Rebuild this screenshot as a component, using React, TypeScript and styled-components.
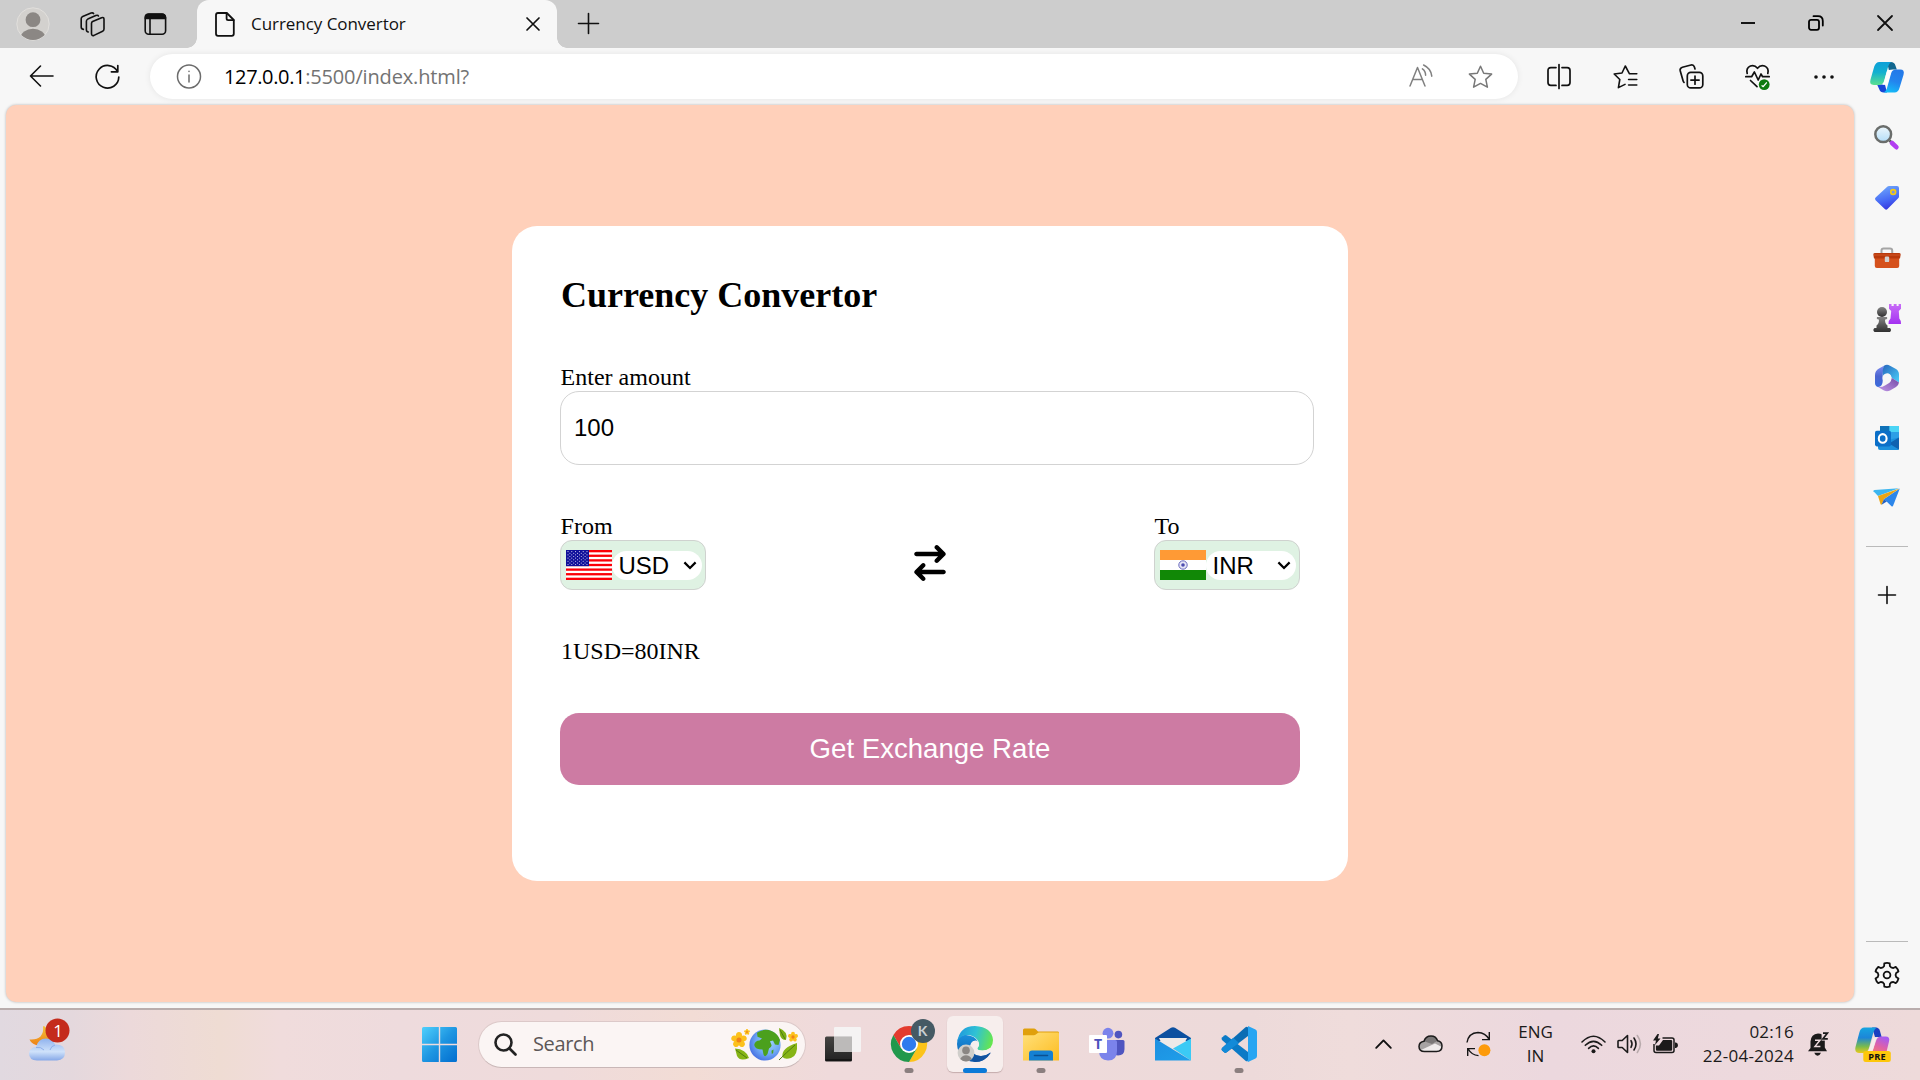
import React from "react";
import styled, { createGlobalStyle, css } from "styled-components";
import { FaArrowRightArrowLeft } from "react-icons/fa6";

const GlobalStyle = createGlobalStyle`
  *, *::before, *::after { box-sizing: border-box; }
  html, body { margin: 0; padding: 0; overflow: hidden; }
  svg { display: block; flex: none; overflow: visible; }
`;

const uiFont = css`font-family: "Open Sans", "Noto Sans", sans-serif;`;
const serif = css`font-family: "Liberation Serif", "Times New Roman", serif;`;
const arial = css`font-family: "Liberation Sans", Arial, sans-serif;`;

const Screen = styled.div`
  width: 1920px;
  height: 1080px;
  display: flex;
  flex-direction: column;
  overflow: hidden;
  background: #f7f7f7;
  ${uiFont}
`;

const Cell = styled.div<{ $w: number; $h?: number }>`
  flex: none;
  width: ${(p) => p.$w}px;
  height: ${(p) => (p.$h ? p.$h + "px" : "100%")};
  display: flex;
  align-items: center;
  justify-content: center;
`;

/* ---------- browser chrome ---------- */

const TitleBar = styled.header`
  flex: none;
  height: 48px;
  display: flex;
  background: #cdcdcd;
`;

const Tab = styled.div`
  position: relative;
  width: 360px;
  margin-left: 7px;
  padding: 0 17px 0 18px;
  display: flex;
  align-items: center;
  background: #f7f7f7;
  border-radius: 12px 12px 0 0;

  &::before,
  &::after {
    content: "";
    position: absolute;
    bottom: 0;
    width: 10px;
    height: 10px;
  }
  &::before {
    left: -10px;
    background: radial-gradient(circle at 0 0, transparent 9.5px, #f7f7f7 10px);
  }
  &::after {
    right: -10px;
    background: radial-gradient(circle at 100% 0, transparent 9.5px, #f7f7f7 10px);
  }
`;

const TabTitle = styled.span`
  flex: 1;
  margin-left: 16px;
  font-size: 17px;
  line-height: 24px;
  letter-spacing: -0.05px;
  color: #111;
  white-space: nowrap;
`;

const WindowControls = styled.div`
  margin-left: auto;
  display: flex;
  height: 46px;
`;

const Toolbar = styled.div`
  flex: none;
  height: 57px;
  display: flex;
  align-items: center;
  background: #f7f7f7;
`;

const NavButtons = styled.div`
  width: 132px;
  height: 56px;
  padding-bottom: 1px;
  display: flex;
`;

const AddressBar = styled.div`
  width: 1368px;
  height: 45px;
  margin: 0 8px 0 18px;
  padding-right: 8px;
  display: flex;
  align-items: center;
  background: #fff;
  border-radius: 23px;
  box-shadow: 0 0 6px rgba(0, 0, 0, 0.08);
`;

const Url = styled.span`
  flex: 1;
  margin-left: -2px;
  font-size: 20px;
  line-height: 28px;
  letter-spacing: -0.15px;
  color: #737373;
  white-space: nowrap;
`;

const Host = styled.span`
  letter-spacing: -0.36px;
  color: #000;
`;

const Workspace = styled.div`
  flex: 1;
  min-height: 0;
  display: flex;
`;

const Page = styled.main`
  width: 1848px;
  height: 897px;
  margin-left: 6px;
  display: flex;
  justify-content: center;
  align-items: flex-start;
  padding-top: 121px;
  background: #ffd0ba;
  border-radius: 10px;
  box-shadow: 0 0 3px rgba(0, 0, 0, 0.28);
`;

const Sidebar = styled.aside`
  width: 66px;
  padding-top: 3px;
  display: flex;
  flex-direction: column;
  align-items: center;
`;

const Divider = styled.div<{ $top: string; $bottom: number }>`
  flex: none;
  width: 42px;
  height: 1px;
  margin-top: ${(p) => p.$top};
  margin-bottom: ${(p) => p.$bottom}px;
  background: #bababa;
`;

/* ---------- convertor card ---------- */

const Card = styled.form`
  width: 836px;
  height: 655px;
  padding: 48px;
  display: flex;
  flex-direction: column;
  background: #fff;
  border-radius: 25px;
  color: #000;
  ${serif}
  font-size: 24px;
  line-height: 27px;
`;

const Title = styled.h2`
  margin: 0 0 48px;
  padding-left: 1px;
  font-size: 36px;
  line-height: 42px;
`;

const Label = styled.div<{ $inset?: number }>`
  padding-left: ${(p) => p.$inset ?? 0.6}px;
`;

const AmountInput = styled.input`
  width: 754px;
  height: 74px;
  margin: 0 0 48px;
  padding: 0 14px 0 13px;
  border: 1px solid #d3d3d3;
  border-radius: 19px;
  background: #fff;
  color: #000;
  outline: none;
  ${arial}
  font-size: 24px;
`;

const Row = styled.div`
  display: flex;
  justify-content: space-between;
`;

const Currency = styled.div`
  width: 146px;
`;

const SelectBox = styled.div`
  height: 50px;
  padding: 0 3px 0 5px;
  display: flex;
  align-items: center;
  justify-content: space-between;
  background: #dff2e3;
  border: 1px solid #cfd2cf;
  border-radius: 12px;
`;

const SelectPill = styled.div`
  width: 90px;
  height: 29px;
  padding: 0 5.5px 0 6.5px;
  display: flex;
  align-items: center;
  justify-content: space-between;
  background: #fff;
  border-radius: 15px;
`;

const NativeSelect = styled.select`
  appearance: none;
  width: 58px;
  height: 29px;
  padding: 0;
  border: 0;
  background: transparent;
  color: #000;
  ${arial}
  font-size: 24px;
  line-height: 29px;
`;

const SwapIcon = styled.div`
  display: flex;
  align-items: center;
  padding-top: 23px;
`;

const Message = styled.div`
  margin: 48px 0;
  padding-left: 1px;
`;

const SubmitButton = styled.button`
  height: 72px;
  border: 0;
  border-radius: 19px;
  background: #cd7ba3;
  color: #fff;
  ${arial}
  font-size: 27.6px;
`;

/* ---------- taskbar ---------- */

const TaskBar = styled.footer`
  flex: none;
  height: 72px;
  padding-bottom: 2px;
  display: flex;
  align-items: center;
  border-top: 2px solid #b9adad;
  background: linear-gradient(
    90deg,
    #e1d9e0 0, #e4d8dd 70px, #ecd9da 130px, #efdcd3 220px, #f0dcdc 280px,
    #eedbdd 400px, #efdbdb 560px, #f2dcd5 690px, #efdadb 830px, #eddada 1250px,
    #efdcdb 1350px, #ecd8de 1550px, #edd9dd 1750px, #eedada 1920px
  );
`;

const Weather = styled.div`
  width: 406px;
  padding: 0 0 8px 29px;
`;

const SearchBox = styled.div`
  width: 328px;
  height: 47px;
  margin: 0 4px 0 6px;
  padding: 0 6px 0 15px;
  display: flex;
  align-items: center;
  background: #fbf5f4;
  border: 1.5px solid #dcc9c9;
  border-bottom-color: #c9b7b7;
  border-radius: 24px;
`;

const SearchText = styled.span`
  flex: 1;
  margin-left: 16px;
  font-size: 20px;
  letter-spacing: -0.35px;
  line-height: 28px;
  color: #5c5757;
`;

const AppTile = styled.div<{ $active?: boolean }>`
  position: relative;
  width: 56px;
  height: 56px;
  margin: 0 5px;
  display: flex;
  align-items: center;
  justify-content: center;
  border-radius: 6px;
  ${(p) => p.$active && css`
    background: #f7eeed;
    box-shadow: 0 1px 1px rgba(120, 90, 90, 0.35);
  `}
`;

const Running = styled.span<{ $active?: boolean }>`
  position: absolute;
  bottom: -1px;
  left: 50%;
  width: ${(p) => (p.$active ? 24 : 9)}px;
  height: 5px;
  transform: translateX(-50%);
  border-radius: 3px;
  background: ${(p) => (p.$active ? "#0b7ad8" : "#8b7f7f")};
`;

const Tray = styled.div`
  margin-left: auto;
  padding-right: 17px;
  height: 56px;
  display: flex;
  align-items: center;
  color: #1b1a1a;
`;

const TrayGroup = styled.div`
  height: 100%;
  padding: 0 6px;
  display: flex;
`;

const TrayText = styled.div<{ $w: number; $align: string; $track: number }>`
  width: ${(p) => p.$w}px;
  text-align: ${(p) => p.$align};
  font-size: 17px;
  line-height: 24px;
  letter-spacing: ${(p) => p.$track}px;
  white-space: nowrap;
`;

/* ---------- line icons ---------- */

type LineProps = { w: number; h: number; s?: number; c?: string; children: React.ReactNode };
const Line = ({ w, h, s = 1.5, c = "#111", children }: LineProps) => (
  <svg width={w} height={h} viewBox={`0 0 ${w} ${h}`} fill="none" stroke={c} strokeWidth={s} strokeLinecap="round" strokeLinejoin="round">
    {children}
  </svg>
);

const Avatar = () => (
  <svg width="34" height="34" viewBox="0 0 34 34">
    <defs><clipPath id="av"><circle cx="17" cy="17" r="16" /></clipPath></defs>
    <circle cx="17" cy="17" r="16.2" fill="#d3d1ce" stroke="#e2e0dd" />
    <g clipPath="url(#av)" fill="#8b8784">
      <circle cx="17" cy="12.7" r="7.4" />
      <ellipse cx="17" cy="31" rx="12.5" ry="9.3" />
    </g>
  </svg>
);

const Workspaces = () => (
  <Line w={25} h={25} s={1.6}>
    <path d="M12.6 9.6 L21.6 5.7 Q24 5 24 7.3 V17 Q24 18.6 22.6 19.3 L14 23.4 Q11.6 24.2 11.5 21.8 V11.4 Q11.5 10.1 12.6 9.6Z" />
    <path d="M8.3 20 Q6.4 19.8 6.4 17.8 V9.2 Q6.4 7.8 7.8 7.1 L15.8 3.5 Q18 2.8 18.4 4" />
    <path d="M3.4 17.4 Q1.2 17 1.2 15 V6.7 Q1.2 5.2 2.7 4.5 L11 1.1 Q13 .5 13.6 1.6" />
  </Line>
);

const TabActions = () => (
  <Line w={23} h={23} s={1.6}>
    <rect x="1.2" y="1.2" width="20.4" height="20" rx="3.5" />
    <path d="M1.6 2.5 Q2.5 1 4.5 1 H18 Q21 1 21.4 4 V5.5 H1.4Z" fill="#111" />
    <path d="M6 6 V21" />
  </Line>
);

const Doc = () => (
  <Line w={20} h={25} s={1.8}>
    <path d="M3 1 H11.8 L18.8 8 V21.8 Q18.8 23.8 16.8 23.8 H3 Q1 23.8 1 21.8 V3 Q1 1 3 1Z" />
    <path d="M11.6 1.2 V6.6 Q11.6 8.2 13.2 8.2 H18.6" />
  </Line>
);

const Cross = ({ size, s }: { size: number; s: number }) => (
  <Line w={size} h={size} s={s}>
    <path d={`M1 1 L${size - 1} ${size - 1} M${size - 1} 1 L1 ${size - 1}`} />
  </Line>
);

const Plus = ({ size }: { size: number }) => (
  <Line w={size} h={size} s={1.6}>
    <path d={`M${size / 2} .5 V${size - 0.5} M.5 ${size / 2} H${size - 0.5}`} />
  </Line>
);

const starPath = "M12.5 1.2 L15.7 8.2 L23.6 9.1 L17.8 14.4 L19.4 22.2 L12.5 18.4 L5.6 22.2 L7.2 14.4 L1.4 9.1 L9.3 8.2Z";

const CopilotLogo = () => (
  <svg width="34" height="32" viewBox="0 0 36 33">
    <defs>
      <linearGradient id="cpa" x1="0" y1="0" x2="0" y2="1"><stop stopColor="#0d9fd8" /><stop offset=".45" stopColor="#12b0d0" /><stop offset="1" stopColor="#5be08f" /></linearGradient>
      <linearGradient id="cpb" x1=".6" y1="0" x2=".3" y2="1"><stop stopColor="#2479e8" /><stop offset=".5" stopColor="#2385ee" /><stop offset="1" stopColor="#14bdf8" /></linearGradient>
    </defs>
    <path d="M18 .5 H22 Q26 .5 27 4.5 L28.4 8.6 H24 L20 9Z" fill="#11668f" />
    <path d="M7.5 24.5 H15.8 L18 33 H14.5 Q11 33 9.8 29.5Z" fill="#1746d6" />
    <path d="M10 .5 H22.5 Q20.5 1.5 19.3 5 L14.8 21 Q13.4 25 9.4 25 H4 Q-1 25 .5 19.5 L4.5 5.5 Q6 .5 10 .5Z" fill="url(#cpa)" />
    <path d="M26 33 H14.5 Q16.7 32 17.8 29 L22.4 12.5 Q23.6 8.5 27.5 8.5 H32 Q37 8.5 35.5 14 L31.3 28 Q30 33 26 33Z" fill="url(#cpb)" />
    <path d="M19 9.2 H23.6 Q22.4 10.6 22 12 L19 22.5 Q18.2 24.8 15.8 24.8 H13 Q14.4 23.4 15 21.4 L17.6 11.6 Q18 10 19 9.2Z" fill="#fdfdfd" />
  </svg>
);

/* ---------- sidebar icons ---------- */

const SearchColor = () => (
  <svg width="26" height="26" viewBox="0 0 26 26">
    <defs><linearGradient id="lens" x1="0" y1="0" x2="0" y2="1"><stop stopColor="#eef7fc" /><stop offset="1" stopColor="#b3ddf8" /></linearGradient></defs>
    <path d="M15.5 15.5 L18 18" stroke="#5b5d5b" strokeWidth="2.5" />
    <path d="M18 18 L22.4 22.2" stroke="#b23df0" strokeWidth="4.6" strokeLinecap="round" />
    <circle cx="9.2" cy="9.2" r="7.9" fill="url(#lens)" stroke="#6a6d6b" strokeWidth="2.5" />
  </svg>
);

const Tag = () => (
  <svg width="26" height="26" viewBox="0 0 26 26">
    <defs><linearGradient id="tag" x1=".3" y1="0" x2=".6" y2="1"><stop stopColor="#6fa8fb" /><stop offset=".6" stopColor="#4668f5" /><stop offset="1" stopColor="#3433dd" /></linearGradient></defs>
    <path d="M13.5 1.6 Q14 1 15 1 H23 Q25 1 25 3 V11.5 Q25 12.5 24.2 13.2 L13.5 24 Q12.2 25.3 10.8 24 L1.6 15.2 Q.3 13.8 1.6 12.5Z" fill="url(#tag)" />
    <circle cx="19.2" cy="7" r="2.4" fill="#7f93d8" stroke="#f6cb12" strokeWidth="1.7" />
  </svg>
);

const Toolbox = () => (
  <svg width="28" height="22" viewBox="0 0 28 22">
    <path d="M8.5 7.5 V3.6 Q8.5 1.5 10.6 1.5 H17 Q19.2 1.5 19.2 3.6 V7.5" fill="none" stroke="#a5a5a5" strokeWidth="2" />
    <path d="M1.8 10 H26.2 V19 Q26.2 21 24.2 21 H3.8 Q1.8 21 1.8 19Z" fill="#d5511c" />
    <path d="M2 6 H26 Q28 6 27.6 8 L27 11.5 H1 L.4 8 Q0 6 2 6Z" fill="#b93a0c" />
    <path d="M1 8 L27 8" stroke="#cf5224" strokeWidth="1.2" />
    <rect x="11.8" y="9.5" width="4.4" height="5.6" rx="1.2" fill="#d2d2d2" />
  </svg>
);

const Games = () => (
  <svg width="28" height="28" viewBox="0 0 28 28">
    <defs>
      <linearGradient id="rook" x1="0" y1="0" x2="0" y2="1"><stop stopColor="#c86df7" /><stop offset="1" stopColor="#a431f1" /></linearGradient>
      <linearGradient id="pawn" x1="0" y1="0" x2="0" y2="1"><stop stopColor="#858585" /><stop offset="1" stopColor="#303030" /></linearGradient>
    </defs>
    <path d="M16 0 H18.5 V2 H20.7 V0 H23.6 V2 H25.6 V0 H28 V4.8 L25.8 7 L26.3 14.5 Q28 16 28 20 H15.5 Q15.5 16 17.5 14.5 L18.2 7 L16 4.8Z" fill="url(#rook)" />
    <circle cx="9" cy="8" r="5" fill="url(#pawn)" />
    <path d="M4 13 H14 Q15 14.5 13 15.6 H12 Q12 20 14.5 21.4 V24 H17 Q19 26 17 28 H1.5 Q-.8 26 1.5 24 H3.5 V21.4 Q6 20 6 15.6 H5 Q3 14.5 4 13Z" fill="url(#pawn)" />
  </svg>
);

const Microsoft365 = () => (
  <svg width="26" height="28" viewBox="0 0 26 28">
    <defs>
      <linearGradient id="ma" x1="0" y1="0" x2="0" y2="1"><stop stopColor="#7e8cf0" /><stop offset=".5" stopColor="#4c65d0" /><stop offset="1" stopColor="#3a6bdc" /></linearGradient>
      <linearGradient id="mb" x1="0" y1="0" x2="1" y2="1"><stop stopColor="#2766bd" /><stop offset="1" stopColor="#4ad0fa" /></linearGradient>
      <linearGradient id="mc" x1="0" y1="1" x2="1" y2="0"><stop stopColor="#c298e8" /><stop offset="1" stopColor="#724aa5" /></linearGradient>
    </defs>
    <path d="M10 1.7 L5 4.5 Q1 6.8 1 11 V19 Q1 22 4 23 Q8.7 22.5 8.7 17 V11 Q8.7 6 10 1.7Z" fill="url(#ma)" />
    <path d="M10 1.7 Q13 0 16 1.7 L22 5 Q25 7 25 10.5 V18.5 L17.5 13.8 Q17 11 15 9.8 Q12 8.5 8.9 12 Q8 6 10 1.7Z" fill="url(#mb)" />
    <path d="M25 18.5 Q24.5 21.5 22 23 L16 26.5 Q13 28 10 26.5 L4 23 Q8 23.5 11 21.5 L15.5 18.8 Q17.5 17 17.5 13.8Z" fill="url(#mc)" />
    <circle cx="13" cy="14" r="4.5" fill="#f7f7f7" />
  </svg>
);

const Outlook = () => (
  <svg width="26" height="26" viewBox="0 0 26 26">
    <rect x="6" y="1" width="19" height="20" rx="1" fill="#35b4ee" />
    <path d="M6 1 H15.5 V7 H6Z" fill="#1072b8" />
    <path d="M15.5 1 H25 V7 H15.5Z" fill="#4bd4f5" />
    <path d="M15.5 7 H25 V14 H15.5Z" fill="#2d9fe6" />
    <path d="M25 12.5 V24 Q25 25 24 25 H6 Q4 25 4 23 V17Z" fill="#1c90dc" />
    <path d="M25 12.5 L15 18.5 L25 24.5Z" fill="#0f62b0" />
    <rect x="1" y="5.8" width="16" height="15.6" rx="1.8" fill="#0b6fc8" />
    <ellipse cx="8.7" cy="13.4" rx="3.9" ry="4.3" fill="none" stroke="#fff" strokeWidth="2.1" />
  </svg>
);

const Plane = () => (
  <svg width="28" height="20" viewBox="0 0 28 20">
    <path d="M.5 3.2 Q0 2.2 1.5 2 L26 .3 L5 8Z" fill="#3eb6ef" />
    <path d="M26.8 .6 L11 11 L18.5 18.2 Q19.6 19 20.2 17.6Z" fill="#2c86ea" />
    <path d="M26.5 .6 L5 8 L7.5 16 Q8.2 17.3 9 16 L11 11Z" fill="#eaa514" />
    <path d="M11 11 L13.8 13.4 L8.6 16.8Z" fill="#2360c4" />
  </svg>
);

const gearPath = (() => {
  const at = (deg: number, r: number) => {
    const a = ((deg - 90) * Math.PI) / 180;
    return `${(13 + r * Math.cos(a)).toFixed(2)} ${(13 + r * Math.sin(a)).toFixed(2)}`;
  };
  let d = `M${at(-13, 12)}`;
  for (let i = 0; i < 6; i++) {
    const b = i * 60;
    d += ` Q${at(b, 12.5)} ${at(b + 13, 12)} L${at(b + 18, 9.4)} Q${at(b + 30, 8)} ${at(b + 42, 9.4)} L${at(b + 47, 12)}`;
  }
  return d + "Z";
})();

/* ---------- flags ---------- */

const FlagUS = () => (
  <svg width="46" height="30" viewBox="0 0 46 30">
    <rect width="46" height="30" fill="#fff" />
    {Array.from({ length: 7 }, (_, i) => (
      <rect key={i} y={(i * 2 * 30) / 13} width="46" height={30 / 13} fill="#fb0008" />
    ))}
    <rect width="23" height="16.15" fill="#10109a" />
    {Array.from({ length: 9 }, (_, r) =>
      Array.from({ length: r % 2 ? 5 : 6 }, (_, k) => (
        <circle key={`${r}-${k}`} cx={2 + k * 3.8 + (r % 2 ? 1.9 : 0)} cy={1.6 + r * 1.62} r=".55" fill="#d8d8f4" />
      ))
    )}
  </svg>
);

const FlagIN = () => (
  <svg width="46" height="30" viewBox="0 0 46 30">
    <rect width="46" height="10" fill="#ff9a35" />
    <rect y="10" width="46" height="10" fill="#fff" />
    <rect y="20" width="46" height="10" fill="#118806" />
    <circle cx="23" cy="15" r="4.2" fill="#e6e6f6" stroke="#6a6abf" strokeWidth="1" />
    <circle cx="23" cy="15" r="1.8" fill="#4c4cb0" />
  </svg>
);

const Chevron = () => (
  <Line w={14} h={9} s={2.2} c="#000"><path d="M1.4 1.4 L7 7 L12.6 1.4" strokeLinecap="butt" strokeLinejoin="miter" /></Line>
);

/* ---------- taskbar icons ---------- */

const WeatherIcon = () => (
  <svg width="42" height="44" viewBox="0 0 42 44">
    <defs>
      <linearGradient id="moon" x1="0" y1="0" x2="0" y2="1"><stop stopColor="#f2c53a" /><stop offset="1" stopColor="#ee8116" /></linearGradient>
      <linearGradient id="cl" x1="0" y1="0" x2="0" y2="1"><stop stopColor="#8fb2ee" /><stop offset=".6" stopColor="#cfe2fa" /><stop offset="1" stopColor="#86a8e8" /></linearGradient>
    </defs>
    <path d="M15 8 Q23 14 20 21 Q15 28 7 27 Q2 25 .5 21.5 Q8 22 11.5 18.5 Q15 14 14 8.6Z" fill="url(#moon)" />
    <path d="M8 42.5 Q0 42 0 35.5 Q.5 29.5 7 29 Q9 20.5 17 20.5 Q24 20.5 26 26.5 Q36 26 36 34.5 Q36 42 28 42.5Z" fill="url(#cl)" />
    <path d="M7 29.5 Q12 28.5 15 32 M26 27 Q22 28 21 32" fill="none" stroke="#8eaeea" strokeWidth="1" />
    <circle cx="28.5" cy="12.5" r="12" fill="#c42b1c" />
    <text x="29" y="18.5" textAnchor="middle" fontFamily="Open Sans, sans-serif" fontSize="17" fill="#fff">1</text>
  </svg>
);

const Windows = () => (
  <svg width="35" height="35" viewBox="0 0 35 35">
    <defs>
      <linearGradient id="wn" gradientUnits="userSpaceOnUse" x1="0" y1="0" x2="32" y2="32"><stop stopColor="#4fd0fc" /><stop offset=".55" stopColor="#1e96e2" /><stop offset="1" stopColor="#0674d2" /></linearGradient>
    </defs>
    <path fill="url(#wn)" d="M1.5 0 H16.8 V16.8 H0 V1.5 Q0 0 1.5 0Z M18.2 0 H33.5 Q35 0 35 1.5 V16.8 H18.2Z M0 18.2 H16.8 V35 H1.5 Q0 35 0 33.5Z M18.2 18.2 H35 V33.5 Q35 35 33.5 35 H18.2Z" />
  </svg>
);

const Flower = ({ x, y, k }: { x: number; y: number; k: number }) => (
  <g transform={`translate(${x} ${y}) scale(${k})`}>
    {[0, 72, 144, 216, 288].map((a) => (
      <ellipse key={a} cx="0" cy="-4" rx="2.9" ry="3.6" fill="#fcc11c" transform={`rotate(${a})`} />
    ))}
    <circle r="2.4" fill="#f08318" />
  </g>
);

const EarthDay = () => (
  <svg width="68" height="36" viewBox="0 0 68 36">
    <defs><radialGradient id="sea" cx=".6" cy=".4" r=".65"><stop stopColor="#a5d6fb" /><stop offset=".6" stopColor="#6fa8f4" /><stop offset="1" stopColor="#476fe2" /></radialGradient></defs>
    <Flower x={8} y={14} k={1.05} />
    <Flower x={16} y={6} k={0.4} />
    <Flower x={62} y={11} k={0.68} />
    <path d="M4 22.5 Q15 23 18 32 Q9 36 6 30 Q5 26 4 22.5Z" fill="#86b416" /><path d="M5 24 L16 32" stroke="#4f7d10" />
    <path d="M48 2 Q58 6 55 14 Q50 14 49 9Z" fill="#7cae14" /><path d="M49 4 L54 13" stroke="#4f7d10" />
    <path d="M66 17 Q67 30 60 32 Q54 34 51.5 31 Q50 22 66 17Z" fill="#86b416" /><path d="M64 19 Q55 27 48 34" stroke="#4f7d10" fill="none" />
    <circle cx="34" cy="19" r="15.6" fill="url(#sea)" />
    <path d="M26 6.8 Q33 1.8 41 5.2 Q47 8 49 14 L47.5 19 L44 18.6 L42 14.5 L39 15.2 L40.5 19 Q41 21 38 22.5 L36.5 28 Q34 32 32.5 28.5 L31.5 23.5 Q24 23.5 23.2 19 Q24 14.5 28.5 14.5 L31 12.5 L26.5 10.8Z" fill="#4ba01d" />
    <path d="M40.5 24.8 L42.5 23.5 L42.2 27 L40.8 28Z" fill="#4ba01d" />
  </svg>
);

const TaskView = () => (
  <svg width="36" height="35" viewBox="0 0 36 35">
    <defs><linearGradient id="tv" x1="0" y1="0" x2="0" y2="1"><stop stopColor="#454442" /><stop offset="1" stopColor="#222" /></linearGradient></defs>
    <rect x="0" y="9.5" width="27" height="25" rx="1.5" fill="url(#tv)" />
    <path d="M.5 33 H26.5" stroke="#0c0c0c" strokeWidth="1.2" />
    <rect x="9" y="0" width="27" height="25" rx="1" fill="#f5f5f5" opacity=".9" />
    <rect x="9" y="9.5" width="18" height="15.5" fill="#bcbab9" />
  </svg>
);

const Chrome = () => (
  <svg width="44" height="44" viewBox="-22 -22 44 44">
    <path d="M-15.6 -9 A18 18 0 0 1 15.6 -9 L0 -9 L-7.8 4.5Z" fill="#e33b2e" />
    <path d="M15.6 -9 A18 18 0 0 1 0 18 L7.8 4.5 L0 -9Z" fill="#fcc31a" />
    <path d="M0 18 A18 18 0 0 1 -15.6 -9 L-7.8 4.5 L7.8 4.5Z" fill="#21984c" />
    <circle r="9" fill="#fff" /><circle r="7.2" fill="#2f7bee" />
    <circle cx="14" cy="-13" r="12" fill="#455a64" />
    <text x="13.6" y="-8" textAnchor="middle" fontFamily="Lato, sans-serif" fontWeight="700" fontSize="14" fill="#c9cfd2">K</text>
  </svg>
);

const Edge = () => (
  <svg width="36" height="36" viewBox="0 0 36 36">
    <defs>
      <linearGradient id="ea" x1="0" y1=".3" x2="1" y2=".5"><stop stopColor="#1e98de" /><stop offset=".5" stopColor="#30c2d4" /><stop offset="1" stopColor="#66e64e" /></linearGradient>
      <linearGradient id="eb" x1="0" y1="0" x2="0" y2="1"><stop stopColor="#1a90dc" /><stop offset="1" stopColor="#0d58ac" /></linearGradient>
    </defs>
    <path d="M0 18 Q0 8 9 9 Q18 9.5 21 16 Q15 13 13 20 Q13 28 23 30 Q28 30.5 33 27 Q28 36 18 36 Q1 35 0 18Z" fill="url(#eb)" />
    <path d="M13 20 Q13.5 30 24 30 Q29 30 33.2 26.5 Q33.8 26.6 33.4 27.5 Q28 36 18 36 Q9 32 13 20Z" fill="#1152a0" />
    <path d="M.2 16.5 Q2 0 18 0 Q35 1 36 14 Q36 24 26 24.5 Q18.5 24.5 20.5 21.5 Q23.5 18 20.5 14 Q16 8.5 9 9 Q2 10 .2 16.5Z" fill="url(#ea)" />
    <path d="M14 17.5 Q17 13 21 15.5 Q23.5 19 20.5 22 Q20 25 26.5 24.6 Q30 24.4 33 22 Q33.5 27 25 28 Q17 28 14.5 24Z" fill="#f5efee" />
    <circle cx="9" cy="27" r="8.4" fill="#d0cecb" /><circle cx="9" cy="24.4" r="3.8" fill="#8a8683" />
    <path d="M3.2 33 Q5 29.2 9 29.2 Q13 29.2 14.8 33 Q9 38 3.2 33Z" fill="#8a8683" />
  </svg>
);

const Folder = () => (
  <svg width="36" height="33" viewBox="0 0 36 33">
    <defs><linearGradient id="fd" x1="0" y1="0" x2="1" y2="1"><stop stopColor="#ffe07a" /><stop offset="1" stopColor="#fdbc20" /></linearGradient></defs>
    <path d="M0 2 Q0 .5 1.5 .5 H11 Q12 .5 13 1.5 L15 3.5 H35 Q36 3.5 36 5 V12 H0Z" fill="#e0a00c" />
    <path d="M0 7.2 H11 Q12.5 7 13.8 5.8 Q15 4.6 16.5 4.6 H35 Q36 4.6 36 6 V32.5 H0Z" fill="url(#fd)" />
    <path d="M6 32.5 V25.5 Q6 22.5 9 22.5 H27 Q30 22.5 30 25.5 V32.5Z" fill="#1580d2" />
    <path d="M11.5 27.5 H24.5" stroke="#0b4f91" strokeWidth="1.6" strokeLinecap="round" />
  </svg>
);

const Teams = () => (
  <svg width="36" height="34" viewBox="0 0 36 34">
    <circle cx="29.4" cy="7.6" r="3.8" fill="#4f55c0" />
    <path d="M24 13 H34 Q35.5 13 35.5 14.5 V22 Q35.5 28.5 29 28.5 Q26 28.5 24 26Z" fill="#4f55c0" />
    <circle cx="19" cy="6.2" r="5.4" fill="#7b83eb" />
    <path d="M10 13 H26 Q28 13 28 15 V24 Q28 33.5 19 33.5 Q10 33 10 24Z" fill="#7b83eb" />
    <rect x="0" y="8" width="18" height="18" rx="1" fill="#fff" />
    <text x="9" y="22" textAnchor="middle" fontFamily="Open Sans, sans-serif" fontWeight="700" fontSize="14" fill="#4b53bc">T</text>
  </svg>
);

const Mail = () => (
  <svg width="36" height="34" viewBox="0 0 36 34">
    <defs><linearGradient id="ml" x1="0" y1="0" x2="1" y2="1"><stop stopColor="#1d8fe0" /><stop offset="1" stopColor="#1e9fea" /></linearGradient></defs>
    <path d="M0 11 L16 .8 Q18 -.3 20 .8 L36 11 V14 H0Z" fill="#0c50a0" />
    <path d="M4 11 H32 L29 17 L18 22 L7 17Z" fill="#eeeae8" />
    <path d="M36 11.5 V33.5 L18 21.5Z" fill="#3bcaf5" />
    <path d="M0 11.5 L36 33.5 H0Z" fill="url(#ml)" />
  </svg>
);

const VSCode = () => (
  <svg width="36" height="36" viewBox="0 0 36 36">
    <path d="M1 11.5 L3.4 9.4 Q4.4 8.8 5.4 9.4 L27 26 V34.5 Q26 36 24.5 34.8 L1 14 Q0 12.7 1 11.5Z" fill="#0b7ac6" />
    <path d="M1 24.5 L3.4 26.6 Q4.4 27.2 5.4 26.6 L27 10 V1.5 Q26 0 24.5 1.2 L1 22 Q0 23.3 1 24.5Z" fill="#0a6db4" />
    <path d="M1 24.5 L3.4 26.6 Q4.4 27.2 5.4 26.6 L18 17 L12.3 11.7 L1 22 Q0 23.3 1 24.5Z" fill="#138ad8" />
    <path d="M27 0 L34.5 3.5 Q36 4.2 36 6 V30 Q36 31.8 34.5 32.5 L27 36 Q26 36 27 33.5Z" fill="#27a5f2" />
  </svg>
);

const Cloud = () => (
  <svg width="25" height="18" viewBox="0 0 25 18">
    <path d="M6.5 16.5 Q1 16.5 1 11.5 Q1.2 7 6 6.3 Q7.5 1 13 1 Q18 1 19.6 5.8 Q24 6.5 24 11 Q24 16.5 18.5 16.5Z" fill="#a7a3a3" />
    <path d="M13 1 Q18 1 19.6 5.8 L14 9 L6 6.3 Q7.5 1 13 1Z" fill="#7a7777" />
    <path d="M3 15 L17 8.5 L24 12 Q23.5 16.5 18.5 16.5 H6.5Z" fill="#efebeb" />
    <path d="M6.5 16.5 Q1 16.5 1 11.5 Q1.2 7 6 6.3 Q7.5 1 13 1 Q18 1 19.6 5.8 Q24 6.5 24 11 Q24 16.5 18.5 16.5Z" fill="none" stroke="#1c1b1b" strokeWidth="1.5" />
  </svg>
);

const Sync = () => (
  <svg width="25" height="26" viewBox="0 0 25 26" fill="none" stroke="#161616" strokeWidth="1.4">
    <path d="M1 11.5 Q2.5 2 12 1.5 Q19.5 1.8 23 8.2 M23.3 1 V8.6 H16" />
    <path d="M12.5 24.6 Q5.5 24 2.2 18 M1.7 25 V17.6 H9" />
    <circle cx="18.4" cy="19.2" r="6" fill="#fd9a0a" stroke="none" />
  </svg>
);

const Wifi = () => (
  <svg width="25" height="19" viewBox="0 0 25 19" fill="none" stroke="#1b1a1a" strokeWidth="1.6" strokeLinecap="round">
    <path d="M1 7 Q12.5 -4.5 24 7 M4.3 10.3 Q12.5 2.3 20.7 10.3 M7.6 13.4 Q12.5 8.4 17.4 13.4" />
    <circle cx="12.5" cy="16.2" r="2" fill="#1b1a1a" stroke="none" />
  </svg>
);

const Speaker = () => (
  <svg width="25" height="20" viewBox="0 0 25 20" fill="none" stroke="#1b1a1a" strokeWidth="1.6" strokeLinecap="round" strokeLinejoin="round">
    <path d="M1 7.2 Q1 6.5 1.8 6.5 H5.2 L10.5 1.5 V18.5 L5.2 13.5 H1.8 Q1 13.5 1 12.8Z M14 6.7 Q16 10 14 13.3 M17 4 Q21 10 17 16" />
    <path d="M20.3 1.5 Q26.5 10 20.3 18.5" stroke="#b9abad" />
  </svg>
);

const Battery = () => (
  <svg width="25" height="20" viewBox="0 0 25 20">
    <path d="M9.5 4 H19 Q21 4 21 6 V16.5 Q21 18.5 19 18.5 H3 Q1 18.5 1 16.5 V10" fill="none" stroke="#1b1a1a" strokeWidth="1.5" />
    <path d="M10 6 H18 Q19.2 6 19.2 7 V15.5 Q19.2 16.7 18 16.7 H4 Q2.9 16.7 2.9 15.5 V11.5 H6Z" fill="#1b1a1a" />
    <path d="M22 8.5 H23 Q25 9 25 11.3 Q25 13.5 23 14 H22Z M4.5 0 L0 6.5 H3 L2 11 L7.5 4.4 H4.8 L6 0Z" fill="#1b1a1a" />
  </svg>
);

const Bell = () => (
  <svg width="21" height="24" viewBox="0 0 21 24">
    <path d="M2.5 18 V9.5 Q3 2 10 1.5 Q15 1.5 16.8 5.5 V15.5 L19 19.2 H0 L2.5 16Z M6.2 20.8 H13 Q11.8 23.7 9.6 23.7 Q7.4 23.7 6.2 20.8Z" fill="#1b1a1a" />
    <path d="M13.6 0 H20.6 V8.6 H13.6Z" fill="#ecd9dc" />
    <path d="M7 8.2 H12 L7 14.4 H12.4" fill="none" stroke="#ecd9dc" strokeWidth="1.5" />
    <path d="M15 1.2 H19.3 L15 6.8 H19.8" fill="none" stroke="#1b1a1a" strokeWidth="1.8" />
  </svg>
);

const CopilotPre = () => (
  <svg width="36" height="35" viewBox="0 0 36 35">
    <defs>
      <linearGradient id="pa" x1="0" y1="0" x2="0" y2="1"><stop stopColor="#16a5e0" /><stop offset=".4" stopColor="#1c86d8" /><stop offset=".75" stopColor="#7bbb4c" /><stop offset="1" stopColor="#e9ca1c" /></linearGradient>
      <linearGradient id="pb" x1=".7" y1="0" x2=".2" y2="1"><stop stopColor="#a55bf2" /><stop offset=".5" stopColor="#de61a8" /><stop offset="1" stopColor="#f8806a" /></linearGradient>
    </defs>
    <path d="M17 .5 H21 Q24 .5 25 4 L26.6 10 H20Z" fill="#1b3fc0" />
    <path d="M9.5 .5 H21.5 Q19.5 2 18.5 5 L14 21 Q12.6 26 8 26 H4 Q-1 25.5 .5 20 L4.5 5 Q5.7 .5 9.5 .5Z" fill="url(#pa)" />
    <path d="M13 27 L17 26 L21 14 Q22.3 9.5 26 9.5 H30.5 Q35.3 9.5 34 14.5 L31 27Z" fill="url(#pb)" />
    <path d="M18 10.5 H22.4 Q21 11.8 20.6 13.5 L18 22.5 Q17 26 14 26 H11.5 Q13.5 24.5 14.2 22Z" fill="#f7ecec" />
    <rect x="8.3" y="24" width="27.5" height="11" rx="2.5" fill="#fdc70b" />
    <text x="22.1" y="32.7" textAnchor="middle" fontFamily="Open Sans, sans-serif" fontWeight="700" fontSize="9.2" letterSpacing=".3" fill="#111">PRE</text>
  </svg>
);

/* ---------- composition ---------- */

const CurrencyPicker = ({ label, code, flag }: { label: string; code: string; flag: React.ReactNode }) => (
  <Currency>
    <Label>{label}</Label>
    <SelectBox>
      {flag}
      <SelectPill>
        <NativeSelect defaultValue={code}><option>{code}</option></NativeSelect>
        <Chevron />
      </SelectPill>
    </SelectBox>
  </Currency>
);

const apps: { icon: React.ReactNode; running?: boolean; active?: boolean }[] = [
  { icon: <TaskView /> },
  { icon: <Chrome />, running: true },
  { icon: <Edge />, running: true, active: true },
  { icon: <Folder />, running: true },
  { icon: <Teams /> },
  { icon: <Mail /> },
  { icon: <VSCode />, running: true },
];

const sideIcons = [<SearchColor />, <Tag />, <Toolbox />, <Games />, <Microsoft365 />, <Outlook />, <Plane />];

export default function App() {
  return (
    <Screen>
      <GlobalStyle />
      <TitleBar>
        <Cell $w={65}><Avatar /></Cell>
        <Cell $w={55}><Workspaces /></Cell>
        <Cell $w={70}><TabActions /></Cell>
        <Tab>
          <Doc />
          <TabTitle>Currency Convertor</TabTitle>
          <Cross size={14} s={1.7} />
        </Tab>
        <Cell $w={62} $h={47}><Plus size={21} /></Cell>
        <WindowControls>
          <Cell $w={69}><Line w={16} h={2} s={1.8} c="#000"><path d="M1 1 H15" strokeLinecap="butt" /></Line></Cell>
          <Cell $w={68}>
            <Line w={16} h={16} s={1.8} c="#000">
              <rect x="1" y="4.8" width="10" height="10" rx="2" />
              <path d="M5.5 1.2 H10 Q14.8 1.2 14.8 6 V10.5" />
            </Line>
          </Cell>
          <Cell $w={70}><Cross size={16} s={1.8} /></Cell>
        </WindowControls>
      </TitleBar>

      <Toolbar>
        <NavButtons>
          <Cell $w={83}><Line w={25} h={22} s={1.6}><path d="M24 11 H1.5 M11.5 1 L1.5 11 L11.5 21" /></Line></Cell>
          <Cell $w={49}><Line w={25} h={25} s={1.7}><path d="M22.5 7.5 A11.3 11.3 0 1 0 23.8 13 M22.8 1.6 V7.8 H16.4" /></Line></Cell>
        </NavButtons>
        <AddressBar>
          <Cell $w={76}><Line w={25} h={25} s={1.5} c="#6c6c6c"><circle cx="13" cy="12.5" r="11.5" /><path d="M13 11 V18 M13 7.2 V7.6" /></Line></Cell>
          <Url><Host>127.0.0.1</Host>:5500/index.html?</Url>
          <Cell $w={58}>
            <Line w={24} h={24} s={1.5} c="#808080">
              <path d="M1 21 L8.5 2.5 L16 21 M3.6 14.6 H13.4" />
              <path d="M13.4 3.8 Q16.6 6 16.6 10.2 M14.6 0 Q22 3.5 22.8 11.2" />
            </Line>
          </Cell>
          <Cell $w={60}><Line w={25} h={24} c="#787878"><path d={starPath} /></Line></Cell>
        </AddressBar>
        <Cell $w={66}>
          <Line w={24} h={25} s={1.7}>
            <path d="M9 3.6 H3.8 Q1 3.6 1 6.4 V18.6 Q1 21.4 3.8 21.4 H9 M15 3.6 H20.2 Q23 3.6 23 6.4 V18.6 Q23 21.4 20.2 21.4 H15 M12 .6 V24.4" />
          </Line>
        </Cell>
        <Cell $w={66}>
          <Line w={25} h={24} s={1.6}>
            <path d="M23.8 8.8 H16.5 L12.3 1 L9 8 L1.2 9 L6.8 14.5 L5.4 22.6 L12 19.4 M15.6 14.5 H23.8 M15.6 20 H23.8" />
          </Line>
        </Cell>
        <Cell $w={66}>
          <Line w={25} h={25} s={1.7}>
            <rect x="8.3" y="8.4" width="15.5" height="15.5" rx="3.5" />
            <path d="M16 12 V20.2 M11.9 16.1 H20.1 M5 18.4 Q4.3 17.8 4 16.6 L1.2 6.8 Q.6 4 3.4 3.2 L12 1 Q14.6 .5 15.4 3 L16 5" />
          </Line>
        </Cell>
        <Cell $w={66}>
          <svg width="25" height="25" viewBox="0 0 25 25" fill="none" stroke="#111" strokeWidth="1.7" strokeLinecap="round" strokeLinejoin="round">
            <path d="M2.2 9.5 Q.8 4 5.4 2 Q9.5 .5 12.5 4.3 Q15.5 .5 19.6 2 Q24.2 4 22.8 9.5" />
            <path d="M.8 12.7 H6.6 L9.4 8 L13.2 16 L16 10 L17.6 12.7 H24.2 M5.5 16.5 L12 22.6" />
            <circle cx="19.2" cy="20.6" r="5.4" fill="#0f7b10" stroke="none" />
            <path d="M17 21.8 L18.2 22.6 L21.4 18.8" stroke="#fff" strokeWidth="1.3" />
          </svg>
        </Cell>
        <Cell $w={67}>
          <svg width="20" height="4" viewBox="0 0 20 4" fill="#111"><circle cx="2" cy="2" r="1.8" /><circle cx="10" cy="2" r="1.8" /><circle cx="18" cy="2" r="1.8" /></svg>
        </Cell>
        <Cell $w={60}><CopilotLogo /></Cell>
      </Toolbar>

      <Workspace>
        <Page>
          <Card>
            <Title>Currency Convertor</Title>
            <Label>Enter amount</Label>
            <AmountInput type="text" defaultValue="100" />
            <Row>
              <CurrencyPicker label="From" code="USD" flag={<FlagUS />} />
              <SwapIcon><FaArrowRightArrowLeft size={36} /></SwapIcon>
              <CurrencyPicker label="To" code="INR" flag={<FlagIN />} />
            </Row>
            <Message>1USD=80INR</Message>
            <SubmitButton type="button">Get Exchange Rate</SubmitButton>
          </Card>
        </Page>
        <Sidebar>
          {sideIcons.map((icon, i) => (
            <Cell key={i} $w={66} $h={60}>{icon}</Cell>
          ))}
          <Divider $top="18px" $bottom={18} />
          <Cell $w={64} $h={60}><Plus size={18} /></Cell>
          <Divider $top="auto" $bottom={3} />
          <Cell $w={66} $h={60}>
            <Line w={26} h={26} s={1.8}><path d={gearPath} /><circle cx="13" cy="13" r="3.4" /></Line>
          </Cell>
          <Cell $w={66} $h={3} />
        </Sidebar>
      </Workspace>

      <TaskBar>
        <Weather><WeatherIcon /></Weather>
        <Cell $w={66}><Windows /></Cell>
        <SearchBox>
          <Line w={23} h={23} s={2.6} c="#222"><circle cx="9.5" cy="9.5" r="8" /><path d="M15.5 15.5 L21.5 21.5" /></Line>
          <SearchText>Search</SearchText>
          <EarthDay />
        </SearchBox>
        {apps.map((app, i) => (
          <AppTile key={i} $active={app.active}>
            {app.icon}
            {app.running && <Running $active={app.active} />}
          </AppTile>
        ))}
        <Tray>
          <Cell $w={48}><Line w={17} h={10} s={1.9}><path d="M1.2 8.8 L8.5 1.4 L15.8 8.8" /></Line></Cell>
          <Cell $w={47}><Cloud /></Cell>
          <Cell $w={48}><Sync /></Cell>
          <TrayText $w={67} $align="center" $track={-0.1}>ENG<br />IN</TrayText>
          <TrayGroup>
            <Cell $w={36}><Wifi /></Cell>
            <Cell $w={36}><Speaker /></Cell>
            <Cell $w={36}><Battery /></Cell>
          </TrayGroup>
          <TrayText $w={105} $align="right" $track={0.25}>02:16<br />22-04-2024</TrayText>
          <Cell $w={48}><Bell /></Cell>
          <Cell $w={61}><CopilotPre /></Cell>
        </Tray>
      </TaskBar>
    </Screen>
  );
}
